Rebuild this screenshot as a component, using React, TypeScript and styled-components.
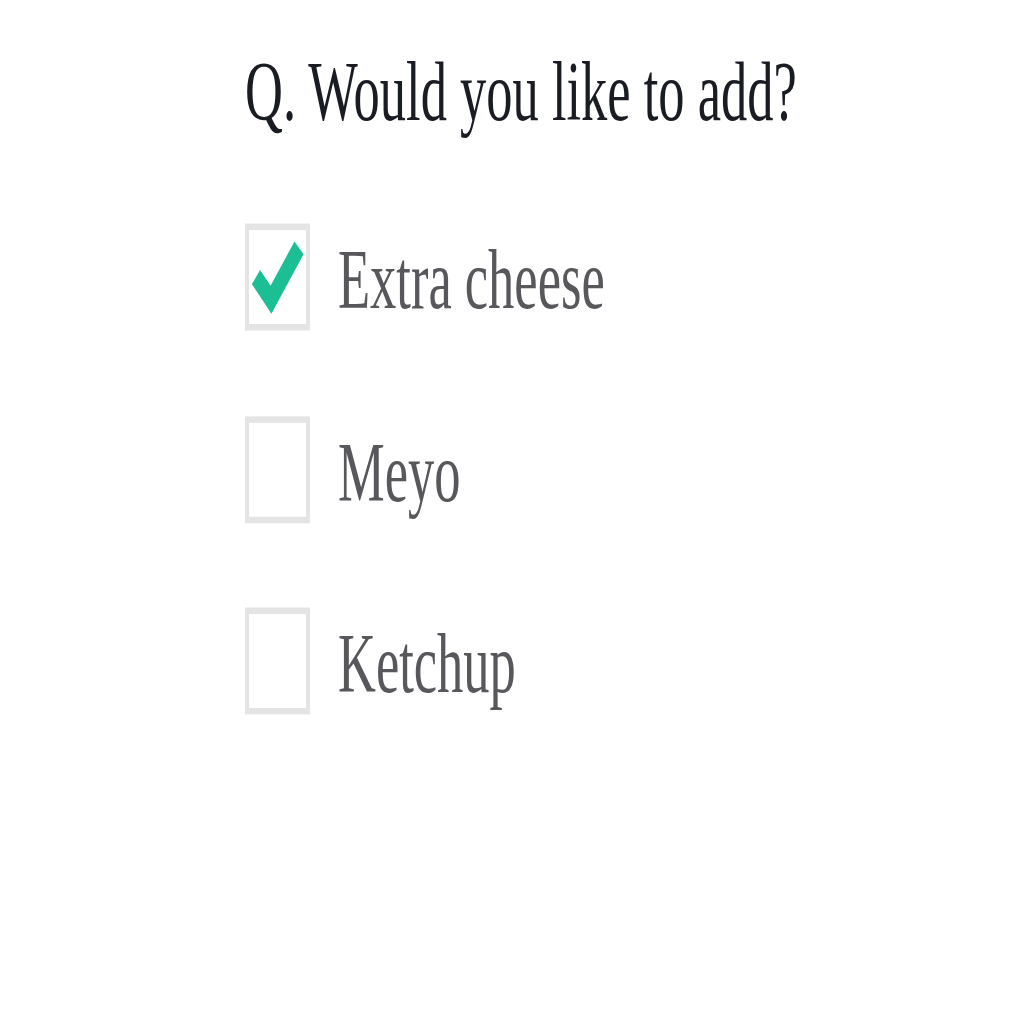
import React from "react";
import styled, { createGlobalStyle } from "styled-components";

const Global = createGlobalStyle`
  html, body { margin: 0; padding: 0; background: #ffffff; }
  body { font-family: "Liberation Serif", "Times New Roman", serif; }
`;

const Page = styled.div`
  width: 1024px;
  height: 1024px;
  overflow: hidden;
  background: #fff;
`;

const Stretch = styled.div`
  transform: scaleY(1.62);
  transform-origin: 0 0;
  padding: 26px 0 0 245px;
  display: flex;
  flex-direction: column;
  gap: 52px;
`;

const Title = styled.h1`
  margin: 0;
  font-family: "Liberation Serif", "Times New Roman", serif;
  font-weight: normal;
  font-size: 52.5px;
  line-height: 60px;
  color: #1a1c24;
  white-space: nowrap;
`;

const List = styled.div`
  display: flex;
  flex-direction: column;
  gap: 52.5px;
`;

const Row = styled.label`
  display: flex;
  align-items: center;
  gap: 28px;
`;

const Box = styled.span`
  box-sizing: border-box;
  width: 65px;
  height: 66px;
  border: 4px solid #e4e4e4;
  background: #fff;
  display: flex;
  flex-shrink: 0;
`;

const Label = styled.span`
  font-family: "Liberation Serif", "Times New Roman", serif;
  font-size: 52.5px;
  line-height: 60px;
  color: #58585c;
  white-space: nowrap;
  position: relative;
  top: 1px;
`;

const Check = () => (
  <svg width="57" height="58" viewBox="0 0 57 58">
    <polyline
      points="7,29 22,43 50,11"
      fill="none"
      stroke="#1bbf93"
      strokeWidth="12"
      strokeLinejoin="miter"
      strokeLinecap="butt"
    />
  </svg>
);

const options = [
  { label: "Extra cheese", checked: true },
  { label: "Meyo", checked: false },
  { label: "Ketchup", checked: false },
];

export default function App() {
  return (
    <Page>
      <Global />
      <Stretch>
        <Title>Q. Would you like to add?</Title>
        <List>
          {options.map((o) => (
            <Row key={o.label}>
              <Box>{o.checked && <Check />}</Box>
              <Label>{o.label}</Label>
            </Row>
          ))}
        </List>
      </Stretch>
    </Page>
  );
}
